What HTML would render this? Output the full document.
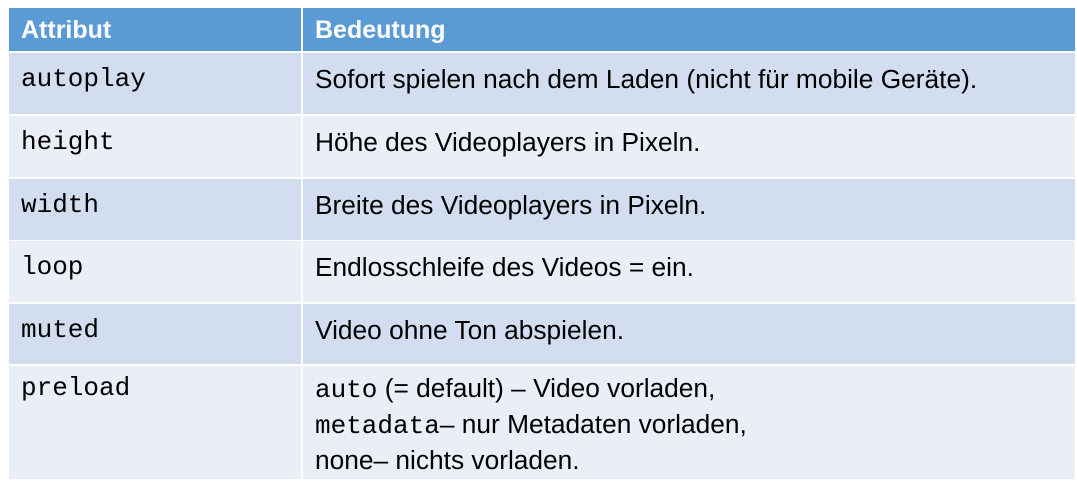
<!DOCTYPE html><html><head><style>
body{margin:0;width:1077px;height:491px;background:#fff;position:relative;overflow:hidden;font-family:"Liberation Sans",sans-serif;}
.c{position:absolute;box-sizing:border-box;padding-left:12px;color:#000;font-size:26.3px;white-space:nowrap;}
.h{background:#5b9bd5;color:#fff;font-weight:bold;font-size:25px;line-height:44px;}
.o{background:#d2deef}.e{background:#e9eef7}
.m{font-family:"Liberation Mono",monospace;font-size:26px;}
.l{left:9px;width:292px}.r{left:303px;width:772px}
.t{padding-top:10px;line-height:32px}
.ln{display:block;height:36px;line-height:36px;overflow:visible}
</style></head><body>
<div class="c h l" style="top:8px;height:43px">Attribut</div>
<div class="c h r" style="top:8px;height:43px">Bedeutung</div>

<div class="c o l t m" style="top:53px;height:61px">autoplay</div>
<div class="c o r t" style="top:53px;height:61px">Sofort spielen nach dem Laden (nicht für mobile Geräte).</div>

<div class="c e l t m" style="top:116px;height:61px">height</div>
<div class="c e r t" style="top:116px;height:61px">Höhe des Videoplayers in Pixeln.</div>

<div class="c o l t m" style="top:179px;height:61px">width</div>
<div class="c o r t" style="top:179px;height:61px">Breite des Videoplayers in Pixeln.</div>

<div class="c e l t m" style="top:241px;height:61px">loop</div>
<div class="c e r t" style="top:241px;height:61px">Endlosschleife des Videos = ein.</div>

<div class="c o l t m" style="top:304px;height:60px">muted</div>
<div class="c o r t" style="top:304px;height:60px">Video ohne Ton abspielen.</div>

<div class="c e l m" style="top:366px;height:113px;padding-top:4px;line-height:36px">preload</div>
<div class="c e r" style="top:366px;height:113px;padding-top:4px"><span class="ln"><span class="m">auto</span> (= default) – Video vorladen,</span><span class="ln"><span class="m">metadata</span>– nur Metadaten vorladen,</span><span class="ln">none– nichts vorladen.</span></div>
</body></html>
